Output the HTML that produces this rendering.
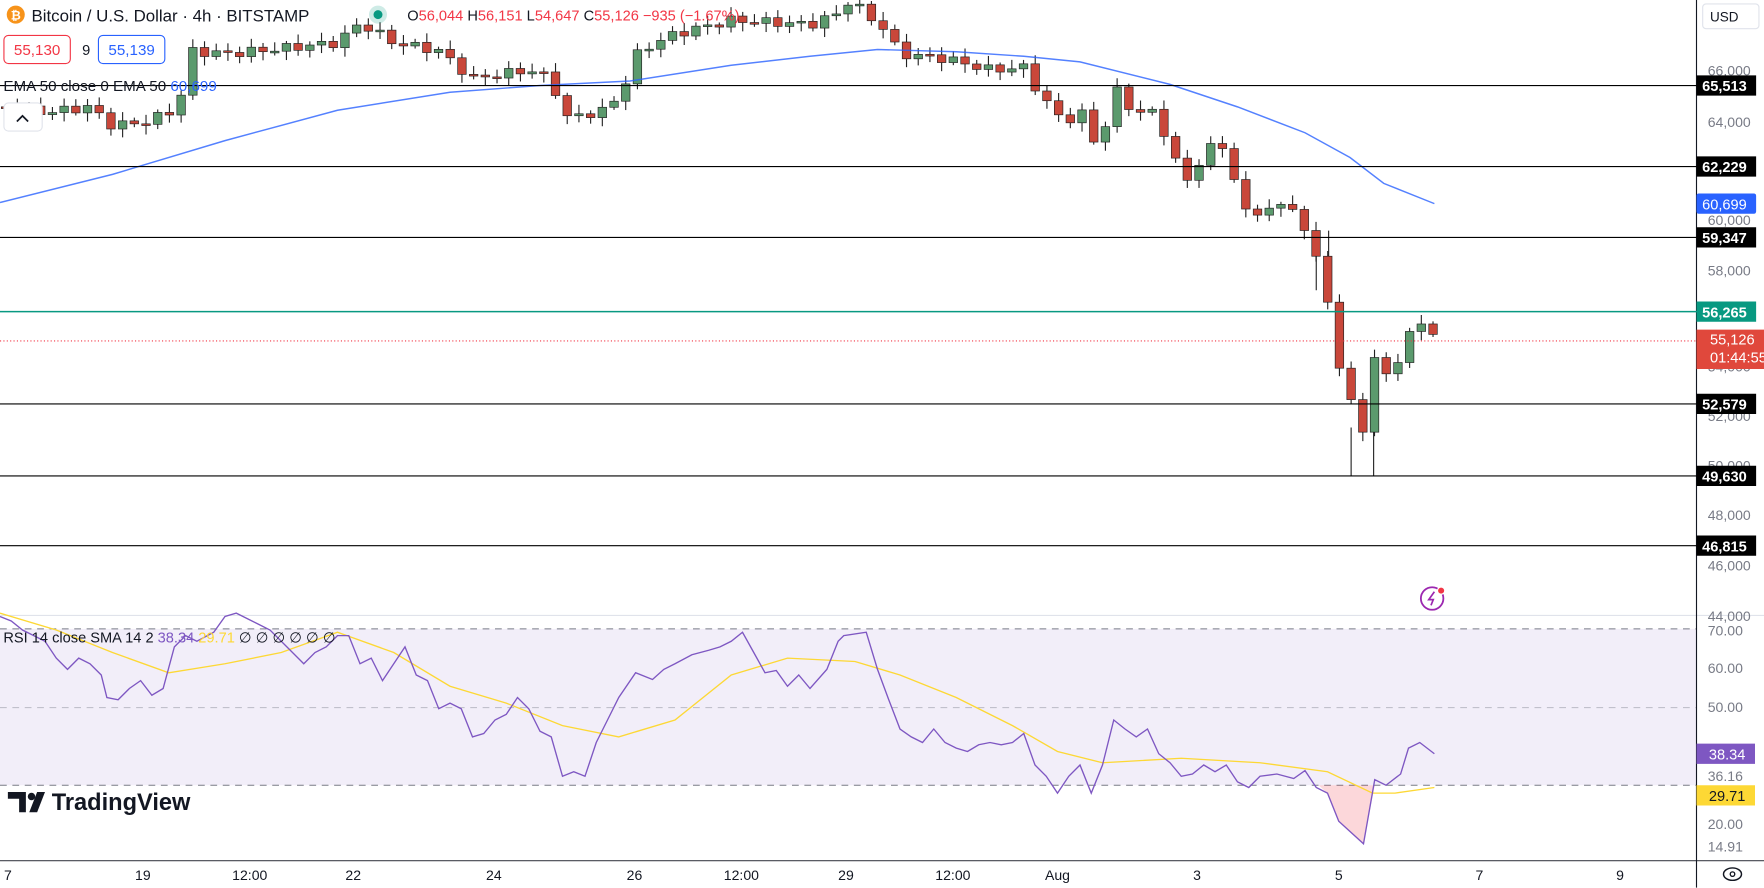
<!DOCTYPE html>
<html><head><meta charset="utf-8"><style>
html,body{margin:0;padding:0;background:#fff;overflow:hidden}
svg{display:block;font-family:"Liberation Sans",sans-serif}
</style></head><body>
<svg id="s" width="1764" height="888" viewBox="0 0 1568 789.33" preserveAspectRatio="none" xmlns="http://www.w3.org/2000/svg">
<rect x="0" y="0" width="1568" height="790" fill="#fff"/>
<rect x="0" y="559" width="1508" height="139" fill="#7e57c2" fill-opacity="0.1"/>
<line x1="0" y1="559" x2="1508" y2="559" stroke="#787b86" stroke-dasharray="6,5" stroke-width="0.8"/>
<line x1="0" y1="629" x2="1508" y2="629" stroke="#9598a1" stroke-dasharray="6,5" stroke-width="0.8" stroke-opacity="0.6"/>
<line x1="0" y1="698" x2="1508" y2="698" stroke="#787b86" stroke-dasharray="6,5" stroke-width="0.8"/>
<line x1="0" y1="547" x2="1568" y2="547" stroke="#e0e3eb" stroke-width="1"/>
<line x1="0" y1="765" x2="1568" y2="765" stroke="#131722" stroke-width="1" stroke-opacity="0.8"/>
<line x1="1508" y1="0" x2="1508" y2="789" stroke="#131722" stroke-width="1"/>
<g stroke="#222" stroke-width="1"><line x1="1201" y1="380" x2="1201" y2="423"/><line x1="1221" y1="380" x2="1221" y2="423"/><line x1="1170" y1="220" x2="1170" y2="258"/><line x1="1181" y1="205" x2="1181" y2="240"/></g>
<g id="candles"></g>
<polyline fill="none" stroke="#2962ff" stroke-opacity="0.8" stroke-width="1.3" points="0,180 100,155 200,125 300,98 400,82 480,76 560,72 650,58 720,50 780,44 850,46 910,50 960,55 1040,75 1100,95 1160,118 1200,140 1230,163 1275,181"/>
<g stroke="#000" stroke-width="1">
<line x1="0" y1="76" x2="1508" y2="76"/><line x1="0" y1="148" x2="1508" y2="148"/>
<line x1="0" y1="211" x2="1508" y2="211"/><line x1="0" y1="359" x2="1508" y2="359"/>
<line x1="0" y1="423" x2="1508" y2="423"/><line x1="0" y1="485" x2="1508" y2="485"/>
</g>
<line x1="0" y1="277" x2="1508" y2="277" stroke="#089981" stroke-width="1.3"/>
<line x1="0" y1="303" x2="1508" y2="303" stroke="#f23645" stroke-width="1" stroke-dasharray="1,2"/>
<path d="M1172,698 L1180,705 1190,730 1212,750 1222,698 Z" fill="#f23645" fill-opacity="0.2"/>
<polyline fill="none" stroke="#fdd835" stroke-width="1.2" points="0,545 50,560 100,580 150,598 200,590 250,580 300,562 350,580 400,610 450,625 500,645 550,655 600,640 650,600 700,585 760,588 800,600 850,620 900,645 940,668 980,678 1050,674 1120,678 1180,686 1220,705 1240,705 1275,700"/>
<polyline fill="none" stroke="#7e57c2" stroke-width="1.2" points="0,548 10,552 20,560 40,570 50,585 60,595 70,585 80,590 90,600 95,620 105,622 115,612 125,605 135,618 145,612 155,575 165,565 175,570 190,562 200,548 210,545 220,550 230,555 240,560 250,570 260,580 270,590 280,580 290,575 300,565 310,565 320,590 330,585 340,605 350,590 360,575 370,600 380,605 390,630 400,625 410,630 420,655 430,652 440,640 450,635 460,620 470,630 480,650 490,655 500,690 510,686 520,690 530,660 540,640 550,620 565,598 580,604 590,595 600,590 615,582 630,578 640,575 650,570 660,562 670,580 680,598 690,596 700,610 710,600 720,612 735,595 745,570 750,565 770,562 780,595 790,622 800,648 810,655 820,660 830,648 840,660 850,665 860,668 870,662 880,660 890,662 900,660 910,652 920,680 930,690 940,705 950,690 960,680 970,705 980,680 990,640 1000,648 1010,655 1020,648 1030,670 1040,678 1050,690 1060,688 1070,680 1080,686 1090,680 1100,695 1110,700 1120,690 1135,688 1150,692 1160,685 1170,700 1180,705 1190,730 1212,750 1222,693 1232,698 1245,688 1252,665 1262,660 1275,670"/>
<circle cx="14" cy="13" r="8" fill="#f7931a"/><text x="14" y="17.5" font-size="11" font-weight="bold" fill="#fff" text-anchor="middle">₿</text>
<text x="28" y="19" font-size="15" fill="#131722">Bitcoin / U.S. Dollar · 4h · BITSTAMP</text>
<circle cx="336" cy="13" r="8" fill="#089981" fill-opacity="0.2"/><circle cx="336" cy="13" r="4" fill="#089981"/>
<text x="362" y="18" font-size="13" fill="#f23645"><tspan fill="#131722">O</tspan>56,044 <tspan fill="#131722">H</tspan>56,151 <tspan fill="#131722">L</tspan>54,647 <tspan fill="#131722">C</tspan>55,126 −935 (−1.67%)</text>
<rect x="3.5" y="31.5" width="59" height="25" rx="4" fill="#fff" stroke="#f23645"/><text x="33" y="49" font-size="13.5" fill="#f23645" text-anchor="middle">55,130</text>
<text x="73" y="49" font-size="13" fill="#131722">9</text>
<rect x="87.5" y="31.5" width="59" height="25" rx="4" fill="#fff" stroke="#2962ff"/><text x="117" y="49" font-size="13.5" fill="#2962ff" text-anchor="middle">55,139</text>
<text x="3" y="81" font-size="13.5" fill="#131722">EMA 50 close 0 EMA 50 <tspan fill="#2962ff">60,699</tspan></text>
<rect x="3.5" y="91.5" width="34" height="25" rx="4" fill="#fff" stroke="#e0e3eb"/><path d="M15,108 l5,-5 5,5" fill="none" stroke="#131722" stroke-width="1.5"/>
<text x="3" y="571" font-size="13" fill="#131722">RSI 14 close SMA 14 2 <tspan fill="#7e57c2">38.34</tspan> <tspan fill="#fdd835">29.71</tspan> ∅ ∅ ∅ ∅ ∅ ∅</text>
<g fill="#131722"><path d="M7,704 h16 v18 h-6 v-12 h-10 z"/><circle cx="28" cy="708" r="3.3"/><path d="M33,704 h7 l-7,18 h-7 z"/></g>
<text x="46" y="720" font-size="21" font-weight="bold" fill="#131722">TradingView</text>
<circle cx="1273" cy="532" r="10" fill="none" stroke="#9c27b0" stroke-width="1.6"/><path d="M1275,526 l-5,7 h4 l-2,5" fill="none" stroke="#9c27b0" stroke-width="1.5"/><circle cx="1281" cy="525" r="3.2" fill="#f23645" stroke="#fff"/>
<rect x="1513.5" y="3.5" width="50" height="22" rx="3" fill="#fff" stroke="#e0e3eb"/><text x="1520" y="19" font-size="12" fill="#131722">USD</text>
<g font-size="12.5" fill="#787b86">
<text x="1518" y="67">66,000</text><text x="1518" y="113">64,000</text><text x="1518" y="200">60,000</text><text x="1518" y="245">58,000</text><text x="1518" y="330">54,000</text><text x="1518" y="374">52,000</text><text x="1518" y="418">50,000</text><text x="1518" y="462">48,000</text><text x="1518" y="507">46,000</text><text x="1518" y="552">44,000</text>
<text x="1518" y="565">70.00</text><text x="1518" y="598">60.00</text><text x="1518" y="633">50.00</text><text x="1518" y="694">36.16</text><text x="1518" y="737">20.00</text><text x="1518" y="757">14.91</text>
</g>
<g font-size="13" font-weight="bold" fill="#fff">
<rect x="1508" y="67" width="53" height="18" fill="#000"/><text x="1513" y="81">65,513</text>
<rect x="1508" y="139" width="53" height="18" fill="#000"/><text x="1513" y="153">62,229</text>
<rect x="1508" y="172" width="53" height="18" fill="#2962ff" rx="2"/><text x="1513" y="186" font-weight="normal">60,699</text>
<rect x="1508" y="202" width="53" height="18" fill="#000"/><text x="1513" y="216">59,347</text>
<rect x="1508" y="268" width="53" height="18" fill="#089981"/><text x="1513" y="282">56,265</text>
<rect x="1508" y="293" width="60" height="35" fill="#e0483c"/><text x="1520" y="306" font-weight="normal">55,126</text><text x="1520" y="322" font-weight="normal">01:44:55</text>
<rect x="1508" y="350" width="53" height="18" fill="#000"/><text x="1513" y="364">52,579</text>
<rect x="1508" y="414" width="53" height="18" fill="#000"/><text x="1513" y="428">49,630</text>
<rect x="1508" y="476" width="53" height="18" fill="#000"/><text x="1513" y="490">46,815</text>
<rect x="1508" y="661" width="52" height="18" fill="#7e57c2"/><text x="1519" y="675" font-weight="normal">38.34</text>
<rect x="1508" y="698" width="52" height="18" fill="#fdd835"/><text x="1519" y="712" font-weight="normal" fill="#131722">29.71</text>
</g>
<g font-size="12.5" fill="#131722" text-anchor="middle">
<text x="7" y="782">7</text><text x="127" y="782">19</text><text x="222" y="782">12:00</text><text x="314" y="782">22</text><text x="439" y="782">24</text><text x="564" y="782">26</text><text x="659" y="782">12:00</text><text x="752" y="782">29</text><text x="847" y="782">12:00</text><text x="940" y="782">Aug</text><text x="1064" y="782">3</text><text x="1190" y="782">5</text><text x="1315" y="782">7</text><text x="1440" y="782">9</text>
</g>
<ellipse cx="1540" cy="777" rx="8" ry="5.5" fill="none" stroke="#131722" stroke-width="1.3"/><circle cx="1540" cy="777" r="2" fill="none" stroke="#131722" stroke-width="1.2"/>
</svg>
<script>
(function(){
var pts=[[0,95],[40,100],[80,95],[100,112],[130,108],[150,100],[160,90],[168,45],[200,48],[260,42],[300,38],[320,20],[350,38],[390,45],[420,70],[470,62],[490,70],[502,105],[540,98],[555,75],[568,45],[600,30],[650,18],[690,20],[720,22],[745,12],[755,0],[785,25],[800,48],[840,52],[880,62],[910,60],[925,85],[945,108],[965,100],[975,135],[992,80],[1008,100],[1025,100],[1035,118],[1047,148],[1058,165],[1070,132],[1090,130],[1105,190],[1150,182],[1162,215],[1176,238],[1190,330],[1202,355],[1212,385],[1222,320],[1234,330],[1245,322],[1255,290],[1265,283],[1275,303]];
function f(x){for(var i=1;i<pts.length;i++){if(x<=pts[i][0]){var a=pts[i-1],b=pts[i];return a[1]+(b[1]-a[1])*(x-a[0])/(b[0]-a[0]);}}return 303;}
var g=document.getElementById('candles'),h='',prev=f(0);
for(var i=0;i<=122;i++){var x=5+i*10.4;if(x>1276)break;var c=f(x)+Math.sin(i*2.3)*4;var o=prev;var up=c<o;var col=up?'#5b9a6d':'#c9473a';var t1=Math.min(o,c),b1=Math.max(o,c);if(b1-t1<1.5)b1=t1+1.5;var wt=t1-2-Math.abs(Math.sin(i*1.7))*6,wb=b1+2+Math.abs(Math.cos(i*1.3))*6;
h+='<line x1="'+x+'" y1="'+wt+'" x2="'+x+'" y2="'+wb+'" stroke="#222" stroke-width="1"/><rect x="'+(x-3.8)+'" y="'+t1+'" width="7.6" height="'+(b1-t1)+'" fill="'+col+'" stroke="#222" stroke-width="0.6"/>';prev=c;}
g.innerHTML=h;
})();
</script>
</body></html>
